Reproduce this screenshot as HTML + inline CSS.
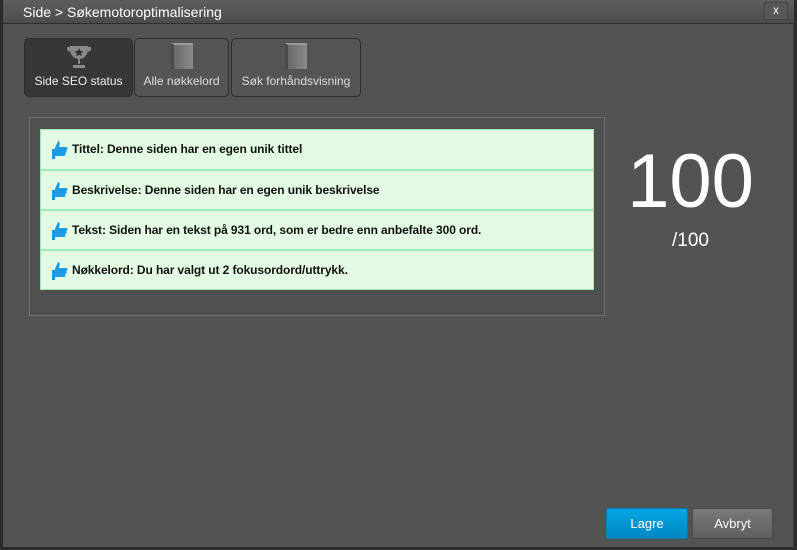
<!DOCTYPE html>
<html><head><meta charset="utf-8"><style>
*{margin:0;padding:0;box-sizing:border-box}
body{width:797px;height:550px;background:#2b2b2b;font-family:"Liberation Sans",Arial,sans-serif;position:relative;overflow:hidden}
.dlg{position:absolute;left:3px;top:0;width:791px;height:547px;background:#535353;border-right:1px solid #3a3a3a}
.title{position:absolute;left:0;top:0;width:791px;height:24px;background:linear-gradient(#5e5e5e,#4c4c4c);border-bottom:1px solid #2e2e2e;color:#fff;font-size:14px;line-height:24px;padding-left:20px}
.x{position:absolute;right:6px;top:2px;width:24px;height:18px;background:#585858;border:1px solid #444;color:#eee;font-size:12px;text-align:center;line-height:15px}
.tab{position:absolute;top:38px;height:59px;border:1px solid #2e2e2e;border-radius:5px;background:#555;color:#ddd;font-size:12px;text-align:center}
.tab span{position:absolute;left:0;right:0;top:35px}
.tab.a{background:#373737;color:#eee}
.book{position:absolute;top:4px;width:22px;height:26px;background:linear-gradient(90deg,#6a6a6a,#8a8a8a);border-left:3px solid #4a4a4a;border-top:2px solid #999}
.panel{position:absolute;left:26px;top:117px;width:576px;height:199px;border:1px solid #6c6c6c;background:#505050}
.list{position:absolute;left:10px;top:11px;width:554px;background:#e2fbe2;border:1px solid #9fe6b9}
.row{height:40px;border-top:2px solid #9fe6b9;font-size:12px;font-weight:bold;color:#111;line-height:38px;padding-left:31px;position:relative;letter-spacing:-0.1px}
.row:first-child{border-top:none;height:39px}
.th{position:absolute;left:11px;top:11px;width:16px;height:18px}
.big{position:absolute;left:600px;top:137px;width:175px;text-align:center;color:#fff;font-size:76px;line-height:90px}
.sm{position:absolute;left:600px;top:230px;width:175px;text-align:center;color:#fff;font-size:19px}
.btn{position:absolute;top:508px;height:31px;border-radius:2px;color:#fff;font-size:13px;text-align:center;line-height:29px}
</style></head><body>
<div class="dlg">
<div class="title">Side &gt; Søkemotoroptimalisering<div class="x">x</div></div>
<div class="tab a" style="left:21px;width:109px"><svg style="position:absolute;left:42px;top:5px" width="24" height="26" viewBox="0 0 24 26"><path d="M3 2h18v3c0 6-4 10-9 10S3 11 3 5z M0 3h3v5l-3-2z M24 3h-3v5l3-2z" fill="#8a8a8a"/><path d="M11 15h2v5h-2z M6 21h12v3H6z" fill="#8a8a8a"/><path d="M12 4l1.5 3 3 .3-2.3 2 .7 3-2.9-1.6-2.9 1.6.7-3-2.3-2 3-.3z" fill="#333"/></svg><span>Side SEO status</span></div>
<div class="tab" style="left:131px;width:95px"><div class="book" style="left:36px"></div><span>Alle nøkkelord</span></div>
<div class="tab" style="left:228px;width:130px"><div class="book" style="left:53px"></div><span>Søk forhåndsvisning</span></div>
<div class="panel"><div class="list">
<div class="row"><svg class="th" viewBox="0 0 16 18"><path d="M6 0c2 0 2 3 1 6h7c2 0 2 3 0 3 1 1 1 3-1 3 1 1 0 3-1 3H3V7z M0 8h3v10H0z" fill="#1b9be6"/></svg>Tittel: Denne siden har en egen unik tittel</div>
<div class="row"><svg class="th" viewBox="0 0 16 18"><path d="M6 0c2 0 2 3 1 6h7c2 0 2 3 0 3 1 1 1 3-1 3 1 1 0 3-1 3H3V7z M0 8h3v10H0z" fill="#1b9be6"/></svg>Beskrivelse: Denne siden har en egen unik beskrivelse</div>
<div class="row"><svg class="th" viewBox="0 0 16 18"><path d="M6 0c2 0 2 3 1 6h7c2 0 2 3 0 3 1 1 1 3-1 3 1 1 0 3-1 3H3V7z M0 8h3v10H0z" fill="#1b9be6"/></svg>Tekst: Siden har en tekst på 931 ord, som er bedre enn anbefalte 300 ord.</div>
<div class="row"><svg class="th" viewBox="0 0 16 18"><path d="M6 0c2 0 2 3 1 6h7c2 0 2 3 0 3 1 1 1 3-1 3 1 1 0 3-1 3H3V7z M0 8h3v10H0z" fill="#1b9be6"/></svg>Nøkkelord: Du har valgt ut 2 fokusordord/uttrykk.</div>
</div></div>
<div class="big">100</div>
<div class="sm">/100</div>
<div class="btn" style="left:603px;width:82px;background:linear-gradient(#02a6e3,#0188c4);border:1px solid #0378ad">Lagre</div>
<div class="btn" style="left:689px;width:81px;background:linear-gradient(#7a7a7a,#5f5f5f);border:1px solid #4a4a4a">Avbryt</div>
</div>
</body></html>
